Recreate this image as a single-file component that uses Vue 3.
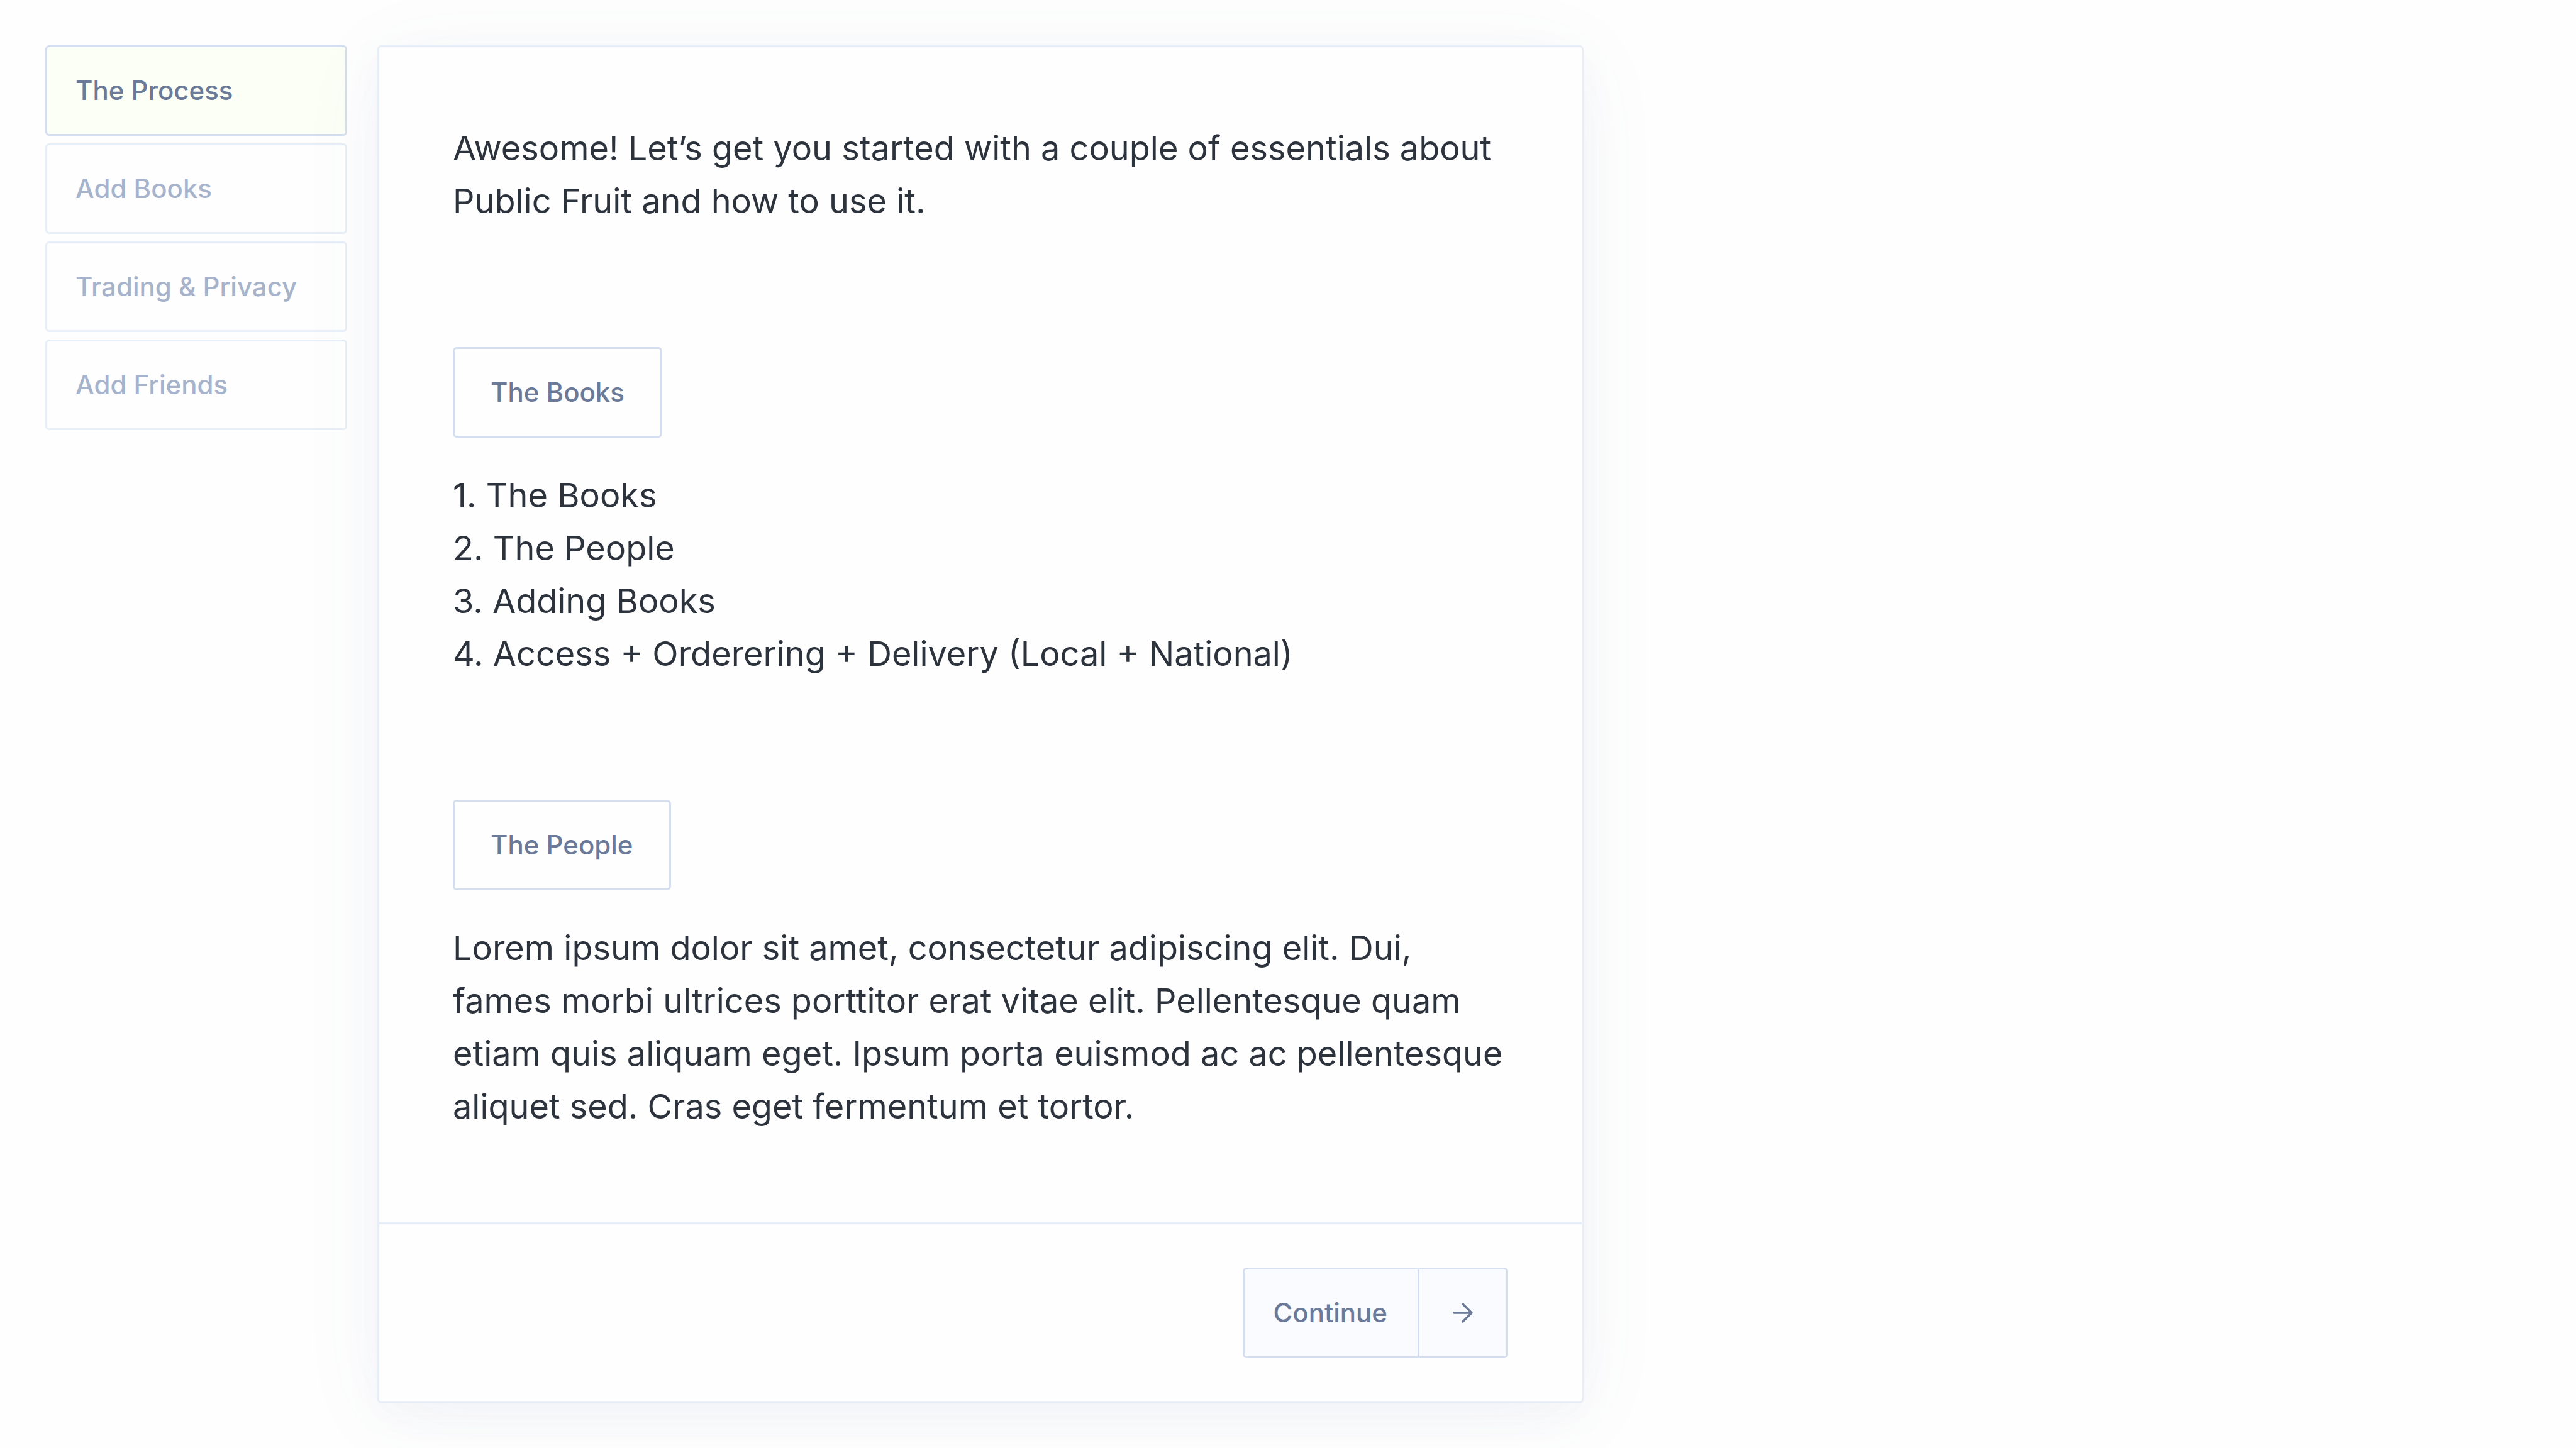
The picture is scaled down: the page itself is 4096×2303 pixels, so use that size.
<script setup>
import { ref } from 'vue'

const steps = ['The Process', 'Add Books', 'Trading & Privacy', 'Add Friends']
const current = ref(0)

const topics = [
  'The Books',
  'The People',
  'Adding Books',
  'Access + Orderering + Delivery (Local + National)',
]
</script>

<template>
  <div class="page">
    <nav class="steps" aria-label="Onboarding steps">
      <button
        v-for="(step, i) in steps"
        :key="step"
        type="button"
        class="step"
        :class="{ active: i === current }"
        @click="current = i"
      >{{ step }}</button>
    </nav>

    <main class="card">
      <div class="content">
        <p>Awesome! Let’s get you started with a couple of essentials about Public Fruit and how to use it.</p>

        <section class="topic">
          <button type="button" class="tag">The Books</button>
          <ol>
            <li v-for="(topic, i) in topics" :key="topic">{{ i + 1 }}. {{ topic }}</li>
          </ol>
        </section>

        <section class="topic">
          <button type="button" class="tag">The People</button>
          <p>Lorem ipsum dolor sit amet, consectetur adipiscing elit. Dui, fames morbi ultrices porttitor erat vitae elit. Pellentesque quam etiam quis aliquam eget. Ipsum porta euismod ac ac pellentesque aliquet sed. Cras eget fermentum et tortor.</p>
        </section>
      </div>

      <footer class="actions">
        <button type="button" class="continue">
          <span class="label">Continue</span>
          <span class="arrow">
            <svg viewBox="0 0 96 96" aria-hidden="true">
              <path d="M20 48H76M48 20L76 48L48 76" />
            </svg>
          </span>
        </button>
      </footer>
    </main>
  </div>
</template>

<style>
body {
  background: #fefefe;
}
</style>

<style scoped>
.page {
  display: flex;
  align-items: flex-start;
  gap: 48px;
  padding: 72px;
  font-family: Inter, "Liberation Sans", sans-serif;
  color: #2d333d;
}

.steps {
  display: flex;
  flex-direction: column;
  flex: 0 1 480px;
  gap: 12px;
}

button {
  box-sizing: border-box;
  height: 144px;
  margin: 0;
  border: 3px solid #d4deee;
  border-radius: 6px;
  background: #fefefe;
  color: #6a7a98;
  font: 500 42px/60px Inter, "Liberation Sans", sans-serif;
  cursor: pointer;
}

.step {
  padding: 0 45px;
  border-color: #e8eef7;
  color: #a6b3cb;
  text-align: left;
}

.step.active {
  border-color: #d4deee;
  background: #fcfff6;
  color: #6a7a98;
}

.card {
  position: relative;
  box-sizing: border-box;
  flex: 0 1 1918px;
  border: 3px solid #e8eef7;
  border-radius: 6px;
  background: #fefefe;
  box-shadow:
    0 18px 60px rgba(100, 110, 160, 0.05),
    0 18px 144px rgba(100, 110, 160, 0.05);
}

.content {
  display: flex;
  flex-direction: column;
  gap: 190px;
  padding: 117px 117px 142px;
  font-size: 54px;
  line-height: 84px;
}

p,
ol {
  margin: 0;
  padding: 2px 0 0;
}

ol {
  list-style: none;
}

.topic {
  display: flex;
  flex-direction: column;
  align-items: flex-start;
  gap: 48px;
}

.tag {
  padding: 0 57px;
}

.actions {
  display: flex;
  justify-content: flex-end;
  padding: 69px 117px;
  border-top: 3px solid #e8eef7;
}

.continue {
  display: flex;
  align-items: stretch;
  padding: 0;
  background: #fafbff;
}

.label {
  display: flex;
  align-items: center;
  padding: 0 48px 0 45px;
}

.arrow {
  display: flex;
  align-items: center;
  justify-content: center;
  width: 138px;
  border-left: 3px solid #d4deee;
}

.arrow svg {
  width: 48px;
  height: 48px;
  fill: none;
  stroke: currentColor;
  stroke-width: 7;
  stroke-linecap: round;
  stroke-linejoin: round;
}
</style>
